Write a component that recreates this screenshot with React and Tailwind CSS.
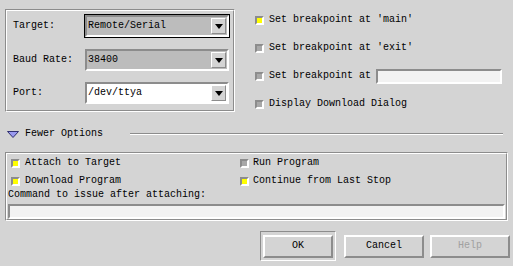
import React from "react";

const C = {
  bg: "bg-[#d4d4d4]",
};

function Check({ on }) {
  return (
    <span
      className={`inline-block w-[9px] h-[9px] shrink-0 border-2 border-t-[#8c8c8c] border-l-[#8c8c8c] border-b-white border-r-white ${
        on ? "bg-[#ffff00]" : "bg-[#a8a8a8]"
      }`}
    />
  );
}

function Combo({ value, white }) {
  return (
    <div
      className={`flex items-center w-[144px] h-[22px] border-2 border-t-[#8c8c8c] border-l-[#8c8c8c] border-b-white border-r-white ${
        white ? "bg-white" : "bg-[#bcbcbc]"
      }`}
    >
      <span className="pl-[1px] whitespace-pre">{value}</span>
      <span className="ml-auto mr-[1px] w-[15px] h-[16px] flex items-center justify-center bg-[#d4d4d4] border border-t-white border-l-white border-b-[#8c8c8c] border-r-[#8c8c8c]">
        <svg width="8" height="5" viewBox="0 0 8 5">
          <path d="M0 0h8L4 5z" fill="#000" />
        </svg>
      </span>
    </div>
  );
}

function Etched({ className, children }) {
  // groove: dark outer top/left, light outer bottom/right
  return (
    <div className={`border border-t-[#8c8c8c] border-l-[#8c8c8c] border-b-white border-r-white ${className}`}>
      <div className="h-full w-full border border-t-white border-l-white border-b-[#8c8c8c] border-r-[#8c8c8c]">
        {children}
      </div>
    </div>
  );
}

function Button({ label, disabled }) {
  return (
    <div
      className={`w-[80px] h-[23px] flex items-center justify-center border-2 border-t-white border-l-white border-b-[#8c8c8c] border-r-[#8c8c8c] bg-[#d4d4d4] ${
        disabled ? "text-[#a0a0a0]" : "text-black"
      }`}
    >
      {label}
    </div>
  );
}

export default function App() {
  return (
    <div
      className={`w-[513px] h-[266px] ${C.bg} text-black text-[10px] leading-[12px] flex flex-col overflow-hidden`}
      style={{ fontFamily: '"Liberation Mono", "DejaVu Sans Mono", monospace' }}
    >
      {/* top area */}
      <div className="flex items-start h-[112px] pl-[5px]">
        <Etched className="mt-[9px] w-[230px] h-[103px]">
          <div className="flex flex-col pl-[6px] pt-[3px]">
            <div className="flex items-center">
              <span className="w-[72px]">Target:</span>
              <div className="-ml-px border border-black">
                <Combo value="Remote/Serial" />
              </div>
            </div>
            <div className="flex items-center mt-[11px]">
              <span className="w-[72px]">Baud Rate:</span>
              <Combo value="38400" />
            </div>
            <div className="flex items-center mt-[11px]">
              <span className="w-[72px]">Port:</span>
              <Combo value="/dev/ttya" white />
            </div>
          </div>
        </Etched>

        <div className="ml-[20px] mt-[6px] flex flex-col">
          <div className="h-[28px] flex items-center gap-[5px]">
            <Check on />
            <span>Set breakpoint at 'main'</span>
          </div>
          <div className="h-[28px] flex items-center gap-[5px]">
            <Check />
            <span>Set breakpoint at 'exit'</span>
          </div>
          <div className="h-[28px] flex items-center gap-[5px]">
            <Check />
            <span>Set breakpoint at</span>
            <div className="w-[126px] h-[15px] bg-[#f2f2f2] border-2 border-t-[#8c8c8c] border-l-[#8c8c8c] border-b-white border-r-white" />
          </div>
          <div className="h-[28px] flex items-center gap-[5px]">
            <Check />
            <span>Display Download Dialog</span>
          </div>
        </div>
      </div>

      {/* fewer options */}
      <div className="mt-[16px] h-[12px] flex items-center pl-[7px] pr-[10px]">
        <svg width="12" height="7" viewBox="0 0 12 7">
          <path d="M0.5 0.5h11L6 6.5z" fill="#9a9af0" stroke="#303070" strokeWidth="1" />
        </svg>
        <span className="ml-[6px]">Fewer Options</span>
        <div className="ml-[27px] flex-1 border-t border-t-[#8c8c8c] border-b border-b-white" />
      </div>

      {/* options box */}
      <Etched className="mt-[12px] ml-[5px] w-[503px] h-[69px]">
        <div className="flex flex-col pt-[2px]">
          <div className="grid grid-cols-[229px_1fr] pl-[4px]">
            <div className="h-[14px] flex items-center gap-[5px]">
              <Check on />
              <span>Attach to Target</span>
            </div>
            <div className="h-[14px] flex items-center gap-[4px]">
              <Check />
              <span>Run Program</span>
            </div>
            <div className="h-[14px] mt-[4px] flex items-center gap-[5px]">
              <Check on />
              <span>Download Program</span>
            </div>
            <div className="h-[14px] mt-[4px] flex items-center gap-[4px]">
              <Check on />
              <span>Continue from Last Stop</span>
            </div>
          </div>
          <div className="pl-[1px] mt-[1px] h-[12px] flex items-center">
            Command to issue after attaching:
          </div>
          <div className="ml-[1px] mt-[3px] w-[497px] h-[15px] bg-[#f2f2f2] border-2 border-t-[#8c8c8c] border-l-[#8c8c8c] border-b-white border-r-white" />
        </div>
      </Etched>

      {/* buttons */}
      <div className="mt-[10px] flex items-center justify-end pr-[3px]">
        <div className="w-[76px] h-[30px] flex items-center justify-center border border-t-[#8c8c8c] border-l-[#8c8c8c] border-b-white border-r-white">
          <div className="w-[70px] h-[23px] flex items-center justify-center border-2 border-t-white border-l-white border-b-[#8c8c8c] border-r-[#8c8c8c]">
            OK
          </div>
        </div>
        <div className="ml-[8px]">
          <Button label="Cancel" />
        </div>
        <div className="ml-[6px]">
          <Button label="Help" disabled />
        </div>
      </div>
    </div>
  );
}
